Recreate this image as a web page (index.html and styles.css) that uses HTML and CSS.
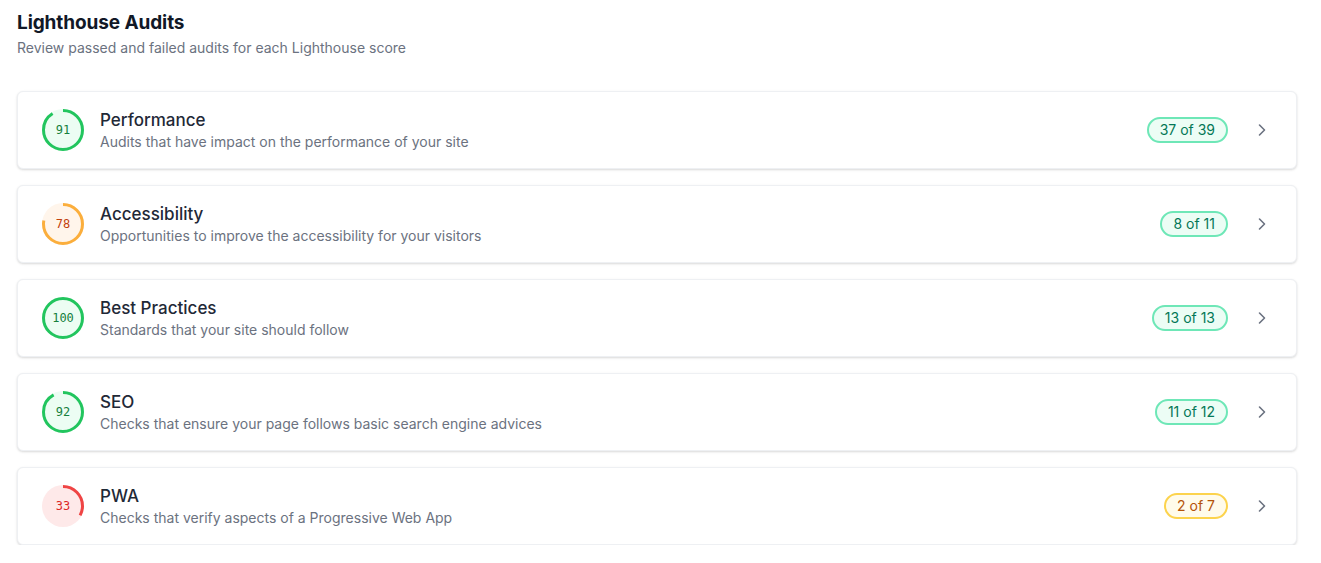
FILE: index.html
```html
<!DOCTYPE html>
<html>
<head>
<meta charset="utf-8">
<link rel="stylesheet" href="styles.css">
</head>
<body>
<div class="page">
  <h1 class="title">Lighthouse Audits</h1>
  <p class="subtitle">Review passed and failed audits for each Lighthouse score</p>
  <div class="list">
    <div class="card">
      <div class="score score-good">
        <svg viewBox="0 0 42 42" class="ring"><circle cx="21" cy="21" r="19.5" pathLength="100" style="stroke-dasharray: 91 100"/></svg>
        <span class="num">91</span>
      </div>
      <div class="info">
        <div class="name">Performance</div>
        <div class="desc">Audits that have impact on the performance of your site</div>
      </div>
      <span class="badge badge-good">37 of 39</span>
      <svg class="chev" viewBox="0 0 20 20"><polyline points="7.5,5 12.5,10 7.5,15"/></svg>
    </div>
    <div class="card">
      <div class="score score-avg">
        <svg viewBox="0 0 42 42" class="ring"><circle cx="21" cy="21" r="19.5" pathLength="100" style="stroke-dasharray: 78 100"/></svg>
        <span class="num">78</span>
      </div>
      <div class="info">
        <div class="name">Accessibility</div>
        <div class="desc">Opportunities to improve the accessibility for your visitors</div>
      </div>
      <span class="badge badge-good">8 of 11</span>
      <svg class="chev" viewBox="0 0 20 20"><polyline points="7.5,5 12.5,10 7.5,15"/></svg>
    </div>
    <div class="card">
      <div class="score score-good">
        <svg viewBox="0 0 42 42" class="ring"><circle cx="21" cy="21" r="19.5" pathLength="100" style="stroke-dasharray: 100 100"/></svg>
        <span class="num">100</span>
      </div>
      <div class="info">
        <div class="name">Best Practices</div>
        <div class="desc">Standards that your site should follow</div>
      </div>
      <span class="badge badge-good">13 of 13</span>
      <svg class="chev" viewBox="0 0 20 20"><polyline points="7.5,5 12.5,10 7.5,15"/></svg>
    </div>
    <div class="card">
      <div class="score score-good">
        <svg viewBox="0 0 42 42" class="ring"><circle cx="21" cy="21" r="19.5" pathLength="100" style="stroke-dasharray: 92 100"/></svg>
        <span class="num">92</span>
      </div>
      <div class="info">
        <div class="name">SEO</div>
        <div class="desc">Checks that ensure your page follows basic search engine advices</div>
      </div>
      <span class="badge badge-good">11 of 12</span>
      <svg class="chev" viewBox="0 0 20 20"><polyline points="7.5,5 12.5,10 7.5,15"/></svg>
    </div>
    <div class="card">
      <div class="score score-bad">
        <svg viewBox="0 0 42 42" class="ring"><circle cx="21" cy="21" r="19.5" pathLength="100" style="stroke-dasharray: 33 100"/></svg>
        <span class="num">33</span>
      </div>
      <div class="info">
        <div class="name">PWA</div>
        <div class="desc">Checks that verify aspects of a Progressive Web App</div>
      </div>
      <span class="badge badge-warn">2 of 7</span>
      <svg class="chev" viewBox="0 0 20 20"><polyline points="7.5,5 12.5,10 7.5,15"/></svg>
    </div>
  </div>
</div>
</body>
</html>
```
FILE: styles.css
```css
* { box-sizing: border-box; }
html, body { margin: 0; background: #ffffff; }
body { font-family: Inter, "Noto Sans", sans-serif; color: #111827; }
.page { padding: 9px 24px 0 17px; }
.title { margin: 0; font-size: 19px; line-height: 27px; font-weight: 700; color: #111827; letter-spacing: -0.1px; }
.subtitle { margin: 2px 0 0; font-size: 14px; line-height: 20px; color: #6b7280; }
.list { margin-top: 33px; display: flex; flex-direction: column; gap: 16px; }
.card {
  display: flex; align-items: center;
  height: 78px; padding: 0 24px;
  background: #fff; border: 1px solid #eef0f3; border-radius: 6px;
  box-shadow: 0 1px 3px rgba(0,0,0,0.10), 0 1px 2px rgba(0,0,0,0.06);
}
.score { position: relative; width: 42px; height: 42px; border-radius: 50%; flex: none; display: flex; align-items: center; justify-content: center; }
.ring { position: absolute; inset: 0; width: 42px; height: 42px; transform: rotate(-90deg); }
.ring circle { fill: none; stroke-width: 3; }
.num { position: relative; font-family: "DejaVu Sans Mono", "Liberation Mono", monospace; font-size: 12px; }
.score-good { background: #ecfdf3; }
.score-good circle { stroke: #22c55e; }
.score-good .num { color: #15803d; }
.score-avg { background: #fff5eb; }
.score-avg circle { stroke: #fbae3c; }
.score-avg .num { color: #c2410c; }
.score-bad { background: #fee9e9; }
.score-bad circle { stroke: #ef4444; }
.score-bad .num { color: #dc2626; }
.info { flex: 1; margin-left: 16px; }
.name { font-size: 17px; line-height: 22px; font-weight: 500; color: #1f2937; margin-bottom: 1px; }
.desc { font-size: 14px; line-height: 20px; color: #6b7280; }
.badge { height: 26px; padding: 0 11px; border-radius: 13px; border: 2px solid; font-size: 14px; line-height: 22px; display: inline-flex; align-items: center; }
.badge-good { background: #ecfdf5; border-color: #6ee7b7; color: #047857; }
.badge-warn { background: #fffbeb; border-color: #fcd34d; color: #b45309; }
.chev { width: 20px; height: 20px; margin-left: 24px; flex: none; }
.chev polyline { fill: none; stroke: #6b7280; stroke-width: 1.6; stroke-linecap: round; stroke-linejoin: round; }
```
